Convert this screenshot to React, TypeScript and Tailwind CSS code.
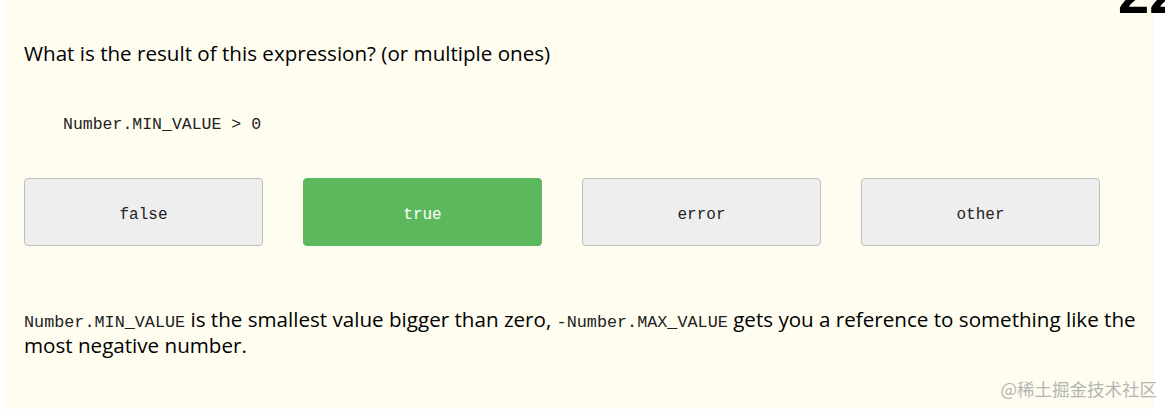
const options = ['false', 'true', 'error', 'other'];
const answer = 'true';

const mono = "font-['Liberation_Mono','DejaVu_Sans_Mono',monospace]";

export default function App() {
  return (
    <div className="relative h-[409px] w-full overflow-hidden bg-white">
      <div className="ml-[3px] h-full w-[1151px] bg-[#fefdf0] pl-[21px] pr-[8px] pt-[40px] font-['Open_Sans','Noto_Sans',sans-serif] text-black">
        <h2 className="text-[20.6px] leading-[26px]">What is the result of this expression? (or multiple ones)</h2>

        <pre className={`${mono} mt-[47px] pl-[39px] text-[16.5px] leading-[24px] text-[#222]`}>Number.MIN_VALUE &gt; 0</pre>

        <div className="mt-[41px] grid grid-cols-[repeat(4,239px)] gap-x-[40px]">
          {options.map((opt) => (
            <button
              key={opt}
              className={`${mono} h-[68px] rounded-[4px] border pt-[6px] text-[16px] ${
                opt === answer
                  ? 'border-[#5cb85c] bg-[#5cb85c] text-white'
                  : 'border-[#bdbdbd] bg-[#eeeeee] text-[#222]'
              }`}
            >
              {opt}
            </button>
          ))}
        </div>

        <p className="mt-[60px] text-[20.6px] leading-[26px]">
          <code className={`${mono} text-[16.8px] leading-none text-[#222]`}>Number.MIN_VALUE</code> is the smallest value bigger than zero,{' '}
          <code className={`${mono} text-[16.8px] leading-none text-[#222]`}>-Number.MAX_VALUE</code> gets you a reference to something like the
          most negative number.
        </p>
      </div>

      <span className="absolute left-[1118px] top-[-34px] font-['Liberation_Sans',Arial,sans-serif] text-[56px] font-bold leading-none text-black">
        22
      </span>

      <span className="absolute right-[8px] top-[377px] font-['Noto_Sans_CJK_SC',sans-serif] text-[17.5px] leading-[24px] text-[#b5b5b5]">
        @稀土掘金技术社区
      </span>
    </div>
  );
}
